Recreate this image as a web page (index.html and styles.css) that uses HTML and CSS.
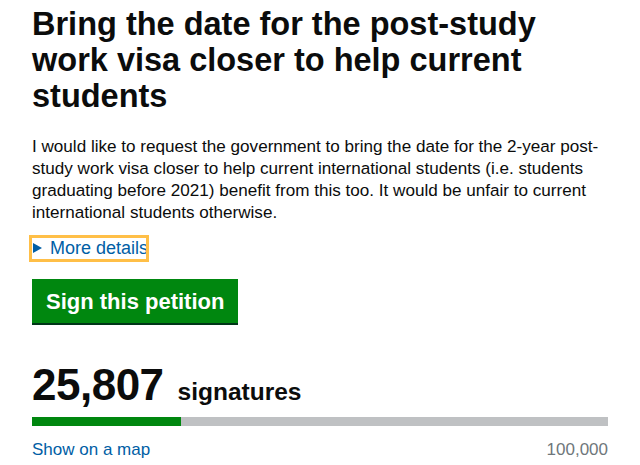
FILE: index.html
```html
<!DOCTYPE html>
<html lang="en-GB">
<head>
  <meta charset="utf-8">
  <title>Bring the date for the post-study work visa closer to help current students</title>
  <link rel="stylesheet" href="styles.css">
</head>
<body>

  <main id="petition" class="column">
    <h1 id="petition-title">Bring the date for the post-study work visa closer to help current students</h1>
    <p id="petition-action">I would like to request the government to bring the date for the 2-year post-study work visa closer to help current international students (i.e. students graduating before 2021) benefit from this too. It would be unfair to current international students otherwise.</p>

    <div id="details-container">
      <a id="more-details" class="link focused" href="#details">
        <span class="arrow"></span>More details
      </a>
    </div>

    <div id="sign-container">
      <a id="sign-button" class="button" href="#sign">Sign this petition</a>
    </div>

    <div id="signature-count">
      <p class="count"><span class="count-number">25,807</span> <span class="count-label">signatures</span></p>
      <div class="progress-bar">
        <span class="progress-fill" style="width: 25.807%"></span>
      </div>
      <div class="count-footer">
        <a class="link" href="#map">Show on a map</a>
        <span class="threshold">100,000</span>
      </div>
    </div>
  </main>

</body>
</html>
```

FILE: styles.css
```css
* {
  box-sizing: border-box;
}
body {
  margin: 0;
  background-color: #fff;
  font-family: "Liberation Sans", Arial, sans-serif;
  color: #0b0c0c;
}
p {
  margin: 0;
}
a {
  text-decoration: none;
}
.column {
  width: 576px;
  margin-left: 32px;
  display: flex;
  flex-direction: column;
}
.link {
  color: #005ea5;
}
#petition-title {
  margin: 6px 0 0;
  font-size: 32.5px;
  line-height: 36px;
  font-weight: bold;
}
#petition-action {
  margin-top: 22px;
  font-size: 17.1px;
  line-height: 22px;
}
#details-container {
  margin-top: 10.5px;
  display: flex;
}
#more-details {
  display: flex;
  align-items: center;
  margin-left: -3px;
  padding: 0 1px 0 4px;
  height: 27px;
  font-size: 18px;
  outline: 3px solid #ffbf47;
  outline-offset: -3px;
}
.arrow {
  width: 0;
  height: 0;
  border-top: 5px solid transparent;
  border-bottom: 5px solid transparent;
  border-left: 9px solid #005ea5;
  margin-right: 8px;
}
#sign-container {
  margin-top: 17px;
  display: flex;
}
.button {
  display: inline-block;
  padding: 0 14px;
  height: 44px;
  line-height: 46px;
  font-size: 22px;
  font-weight: bold;
  color: #fff;
  background-color: #00870f;
  box-shadow: 0 2px 0 #003618;
}
#signature-count {
  margin-top: 37.5px;
}
.count {
  display: flex;
  align-items: baseline;
  height: 50px;
  line-height: 50px;
}
.count-number {
  font-size: 44px;
  font-weight: bold;
  letter-spacing: -0.5px;
  margin-right: 14px;
}
.count-label {
  font-size: 24.5px;
  font-weight: bold;
}
.progress-bar {
  margin-top: 6.5px;
  height: 9px;
  background-color: #bfc1c3;
  display: flex;
}
.progress-fill {
  display: block;
  height: 100%;
  background-color: #00870f;
}
.count-footer {
  margin-top: 14.5px;
  display: flex;
  justify-content: space-between;
  font-size: 17px;
}
.threshold {
  color: #6f777b;
}
```
